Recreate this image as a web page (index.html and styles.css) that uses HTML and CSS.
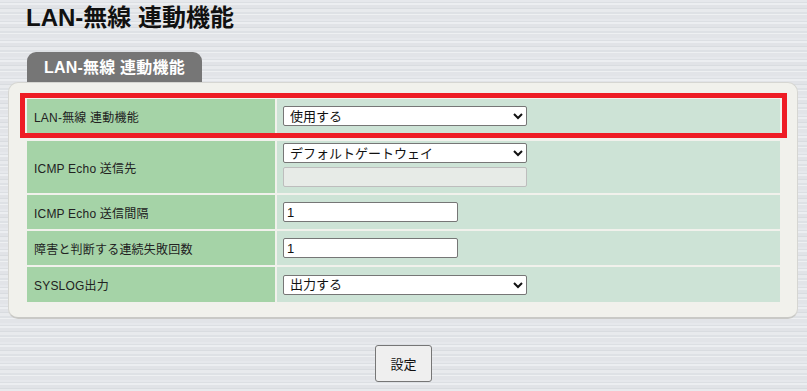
FILE: index.html
```html
<!DOCTYPE html>
<html lang="ja">
<head>
  <meta charset="UTF-8" />
  <meta name="viewport" content="width=device-width, initial-scale=1.0" />
  <title>LAN-無線 連動機能</title>
  <link rel="stylesheet" href="styles.css">
</head>
<body>

<h1>LAN-無線 連動機能</h1>

<div class="tab">LAN-無線 連動機能</div>

<div class="panel">
  <!-- highlighted row -->
  <div class="highlight">
    <div class="row">
      <div class="label">LAN-無線 連動機能</div>
      <div class="value">
        <select class="wide">
          <option>使用する</option>
          <option>使用しない</option>
        </select>
      </div>
    </div>
  </div>

  <div class="rows">
    <div class="row tall">
      <div class="label">ICMP Echo 送信先</div>
      <div class="value stack">
        <select class="wide">
          <option>デフォルトゲートウェイ</option>
          <option>指定アドレス</option>
        </select>
        <input class="wide" type="text" disabled>
      </div>
    </div>
    <div class="row">
      <div class="label">ICMP Echo 送信間隔</div>
      <div class="value"><input class="short" type="text" value="1"></div>
    </div>
    <div class="row">
      <div class="label">障害と判断する連続失敗回数</div>
      <div class="value"><input class="short" type="text" value="1"></div>
    </div>
    <div class="row last">
      <div class="label">SYSLOG出力</div>
      <div class="value">
        <select class="wide">
          <option>出力する</option>
          <option>出力しない</option>
        </select>
      </div>
    </div>
  </div>
</div>

<div class="actions">
  <button>設定</button>
</div>

</body>
</html>
```

FILE: styles.css
```css
body {
  margin: 0;
  font-family: "Liberation Sans", "Noto Sans CJK JP", sans-serif;
  color: #111;
  background-color: #e3e5e9;
  background-image: repeating-linear-gradient(180deg,
    #e6e8ec 0px, #e6e8ec 2px,
    #dcdfe3 2px, #dcdfe3 3px,
    #eceef1 3px, #eceef1 5px,
    #e1e3e7 5px, #e1e3e7 8px,
    #d9dce0 8px, #d9dce0 9px,
    #e8eaed 9px, #e8eaed 12px,
    #dee1e5 12px, #dee1e5 14px,
    #eef0f2 14px, #eef0f2 15px,
    #e2e4e8 15px, #e2e4e8 19px);
  min-height: 391px;
}

h1 {
  margin: 3px 0 0 26px;
  font-size: 24px;
  line-height: 29px;
  font-weight: bold;
  color: #111;
}

.tab {
  display: inline-block;
  margin: 20px 0 0 27px;
  height: 30px;
  padding: 0 17px;
  line-height: 32px;
  background: #767676;
  color: #fff;
  font-size: 16px;
  font-weight: bold;
  letter-spacing: 0.2px;
  border-radius: 9px 9px 0 0;
}

.panel {
  margin: 0 9px 0 8px;
  padding: 10px 10px 15px 11px;
  background: #f1f1ec;
  border: 1px solid #d6d6d2;
  border-bottom: 2px solid #c9c9c6;
  border-radius: 10px;
}

.highlight {
  border: 5px solid #ee1c25;
  padding: 1px 2px 0 2px;
}

.rows {
  margin-top: 3px;
  padding: 0 7px;
  display: flex;
  flex-direction: column;
  gap: 2px;
}

.row {
  display: grid;
  grid-template-columns: 248px 1fr;
  column-gap: 2px;
  height: 34px;
}

.row.tall {
  height: 52px;
}

.row.last {
  height: 35px;
}

.label {
  background: #a5d3a7;
  font-size: 12px;
  letter-spacing: 0.2px;
  color: #222;
  padding-left: 7px;
  display: flex;
  align-items: center;
}

.value {
  background: #cde3d6;
  padding-left: 6px;
  display: flex;
  align-items: center;
}

.value.stack {
  flex-direction: column;
  align-items: flex-start;
  justify-content: flex-start;
  padding-top: 2px;
  gap: 4px;
}

select,
input {
  box-sizing: border-box;
  height: 20px;
  margin: 0;
  font-family: "Liberation Sans", "Noto Sans CJK JP", sans-serif;
  font-size: 13px;
  color: #111;
  background: #fff;
  border: 1px solid #767676;
  border-radius: 2px;
}

select {
  padding: 0 0 0 2px;
}

input {
  padding: 0 3px;
}

.wide {
  width: 244px;
}

.short {
  width: 175px;
}

input:disabled {
  background: #e7ebe7;
  border-color: #bdbdbd;
}

.actions {
  margin-top: 26px;
  text-align: center;
}

button {
  width: 57px;
  height: 37px;
  font-family: "Liberation Sans", "Noto Sans CJK JP", sans-serif;
  font-size: 13px;
  color: #111;
  background: #efefef;
  border: 1px solid #767676;
  border-radius: 3px;
  cursor: pointer;
}
```
